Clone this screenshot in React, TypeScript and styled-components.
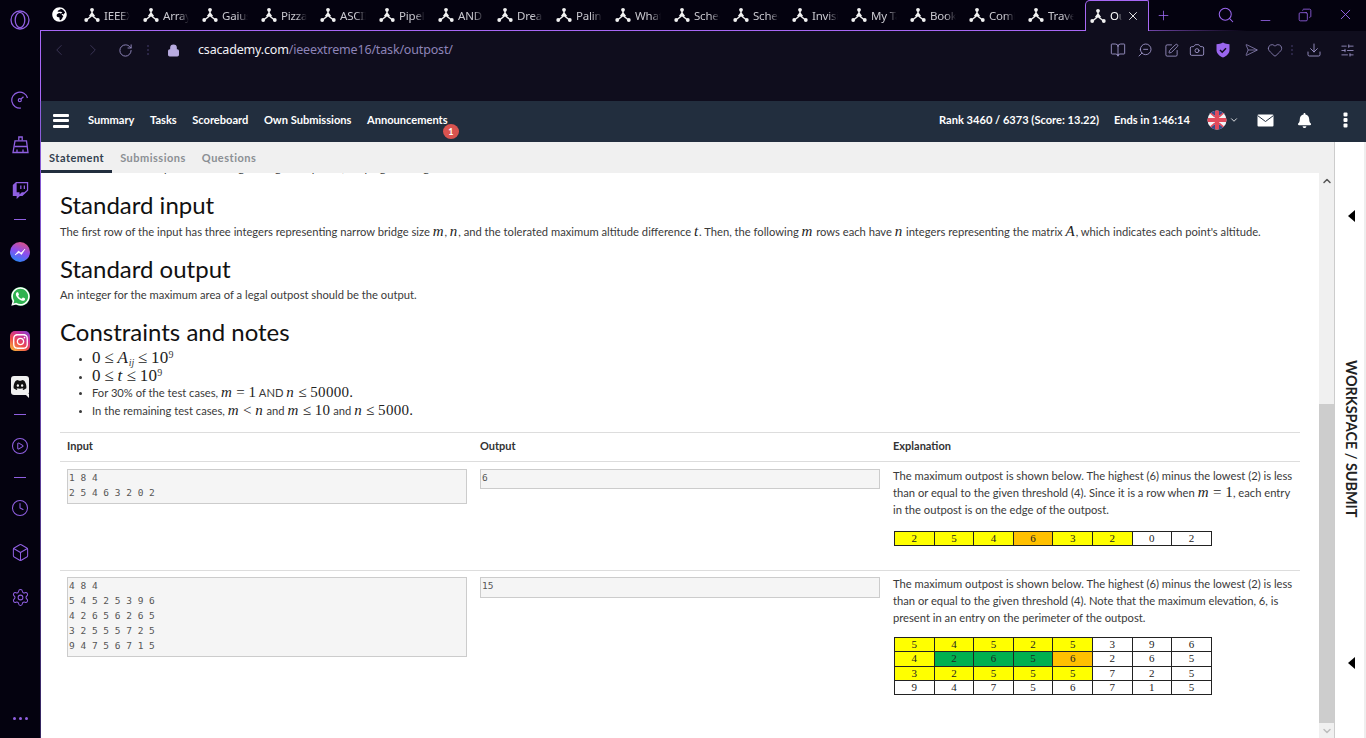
import React from "react";
import styled, { createGlobalStyle } from "styled-components";
import {
  BookOpen, Box, Camera, ChevronDown, ChevronLeft, ChevronRight, ChevronUp, CirclePlay, Clock, Copy, Download,
  Heart, Lock, Minus, Plus, RotateCw, Search, Send, Settings, SlidersHorizontal, SquarePen, X, ZoomOut,
} from "lucide-react";
import { FaBell, FaDiscord, FaGlobeAfrica, FaInstagram, FaTwitch, FaWhatsapp } from "react-icons/fa";

const Global = createGlobalStyle`
  html, body, #root { height: 100%; margin: 0; }
  body { overflow: hidden; background: #04020f; font-family: "Lato", "Liberation Sans", sans-serif; }
  * { box-sizing: border-box; }
`;

const purple = "#8f5fe0";

const Shell = styled.div`display: flex; height: 738px; width: 1366px; overflow: hidden;`;
const Rail = styled.nav`
  width: 40px; flex: none; padding: 8px 0; display: flex; flex-direction: column; align-items: center;
  background: #04020f; color: ${purple};
`;
const RailSlot = styled.div<{ $gap?: number; $end?: boolean }>`
  height: 24px; width: 24px; flex: none; display: flex; align-items: center; justify-content: center;
  margin-top: ${p => (p.$end ? "auto" : `${p.$gap ?? 0}px`)};
`;
const Dash = styled.span`display: block; width: 12px; height: 1px; background: #8f5fe0;`;
const Messenger = styled.span`
  width: 20px; height: 20px; border-radius: 50%; display: flex; align-items: center; justify-content: center; color: #fff;
  background: linear-gradient(200deg, #e0527c 5%, #8a4ef0 50%, #1f8cf5 95%);
`;
const Whats = styled.span`
  width: 19px; height: 19px; display: flex; align-items: center; justify-content: center; border-radius: 50%;
  background: #2fb350; color: #fff; font-size: 21px;
`;
const Insta = styled.span`
  width: 20px; height: 20px; border-radius: 5px; display: flex; align-items: center; justify-content: center; color: #fff;
  background: linear-gradient(35deg, #f6b73c 5%, #ee4b4b 40%, #c9329a 70%, #7a45d8 100%); font-size: 17px;
`;
const DiscordBadge = styled.span`
  width: 18px; height: 19px; border-radius: 3px; display: flex; align-items: center; justify-content: center;
  background: #f0f0f0; color: #111; font-size: 14px; position: relative;
  &::after {
    content: ""; position: absolute; right: 0; bottom: -3px; width: 0; height: 0;
    border-top: 4px solid #f0f0f0; border-left: 4px solid transparent;
  }
`;
const Dots = styled.span`
  display: flex; gap: 3px;
  i { display: block; width: 3px; height: 3px; border-radius: 50%; background: #8f5fe0; }
`;

const Main = styled.div`flex: 1; min-width: 0; display: flex; flex-direction: column;`;
const TabStrip = styled.div`
  height: 31px; flex: none; display: flex; align-items: center; padding-left: 1px; color: #d8d6de;
  background:
    linear-gradient(90deg, #a868f5 0, #a868f5 80%, rgba(168,104,245,0) 91%) left bottom / 100% 1px no-repeat,
    #04020f;
`;
const GlobeSlot = styled.div`width: 43px; flex: none; display: flex; justify-content: center; color: #fff; font-size: 15px; padding-right: 7px; margin-top: -2px;`;
const Tab = styled.div`width: 59px; flex: none; display: flex; align-items: center; gap: 4px; height: 30px; margin-top: -1px;`;
const TabName = styled.span<{ $w?: number }>`
  width: ${p => p.$w ?? 26}px; overflow: hidden; white-space: nowrap; font: 11.5px "Noto Sans", sans-serif; letter-spacing: -0.2px; color: #c9c8cf;
  -webkit-mask-image: linear-gradient(90deg, #000 60%, transparent 100%);
  mask-image: linear-gradient(90deg, #000 60%, transparent 100%);
`;
const ActiveTab = styled.div`
  width: 64px; height: 31px; flex: none; margin-left: -2px; display: flex; align-items: center; gap: 4px; padding: 0 0 1px 4px;
  background: #0f0d1d; border: 1px solid #a868f5; border-bottom: 0; border-top-left-radius: 5px; border-top-right-radius: 2px;
  color: #fff;
`;
const ActiveName = styled(TabName)`width: 12px; color: #fff;`;
const PlusSlot = styled.div`width: 28px; padding-left: 7px; color: #9a66ee; display: flex;`;
const WindowControls = styled.div`margin-left: auto; display: flex; align-items: center; padding-right: 12px; color: #9a66ee; gap: 21px; margin-top: -2px;`;

const AddressBar = styled.div`
  height: 70px; flex: none; background: #0f0d1d; border-left: 1px solid #a868f5; display: flex; align-items: flex-start; padding-top: 9px; color: #7d72a8;
`;
const BarSlot = styled.div<{ $w: number; $dim?: boolean; $c?: string }>`
  width: ${p => p.$w}px; height: 20px; flex: none; display: flex; justify-content: center; align-items: center;
  color: ${p => p.$c ?? (p.$dim ? "#3d3759" : "#8d84b8")};
`;
const Url = styled.div`font: 12.5px/20px "Noto Sans", sans-serif; color: #8d84b8; margin-left: 6px; letter-spacing: -0.17px; white-space: nowrap;`;
const UrlHost = styled.span`color: #f2f1f6;`;
const BarTools = styled.div`margin-left: auto; display: flex; padding-right: 2px;`;
const VDots = styled.span`
  display: flex; flex-direction: column; gap: 2px;
  i { width: 2px; height: 2px; background: #2a2545; display: block; }
`;

const Page = styled.div`
  flex: 1; min-height: 0; display: flex; flex-direction: column; background: #fff;
  border-left: 1px solid; border-image: linear-gradient(180deg, #8f5fe0 0%, #6a48ad 45%, #33255e 100%) 1;
`;
const SiteNav = styled.header`
  height: 41px; flex: none; background: #222e3e; display: flex; align-items: center; color: #fff; padding-left: 12px;
  font: 700 11.1px "Lato", sans-serif;
`;
const Burger = styled.span`
  width: 16px; height: 14px; display: flex; flex-direction: column; justify-content: space-between; margin-right: 19px; margin-top: -2px;
  i { display: block; height: 3px; background: #fff; border-radius: 1px; }
`;
const NavLinks = styled.div`display: flex; gap: 15.5px; margin-top: -5px;`;
const NavLink = styled.a`position: relative; white-space: nowrap;`;
const Badge = styled.span`
  position: absolute; left: 76px; top: 11px; width: 16px; height: 15px; border-radius: 50%; background: #d9534f; color: #fff;
  font: 700 9px/15px "Lato", sans-serif; text-align: center;
`;
const NavRight = styled.div`margin-left: auto; display: flex; align-items: center; margin-top: -3px;`;
const NavStat = styled.span`white-space: nowrap; margin-right: 15px; margin-top: -2px;`;
const FlagWrap = styled.span`display: flex; align-items: center; margin-left: 2px; gap: 2px; margin-right: 16px; svg { display: block; }`;
const NavIcon = styled.span<{ $w: number; $l?: number; $r?: number }>`
  width: ${p => p.$w}px; display: flex; justify-content: center; flex: none;
  margin-left: ${p => p.$l ?? 0}px; margin-right: ${p => p.$r ?? 0}px;
`;

const Workarea = styled.div`flex: 1; min-height: 0; display: flex;`;
const Statement = styled.div`flex: 1; min-width: 0; display: flex; flex-direction: column; border-right: 1px solid #ccc;`;
const SubTabs = styled.div`height: 31px; flex: none; display: flex; background: #f0f0f0;`;
const SubTab = styled.a<{ $active?: boolean }>`
  height: 31px; padding: 0 8px; font: 700 11px/31px "Lato", sans-serif; letter-spacing: 0.5px;
  color: ${p => (p.$active ? "#33404f" : "#8b8f94")};
  border-bottom: 3px solid ${p => (p.$active ? "#222e3e" : "transparent")};
`;
const ScrollArea = styled.div`flex: 1; min-height: 0; display: flex; overflow: hidden;`;
const Doc = styled.article`flex: 1; min-width: 0; overflow: hidden; padding: 0 19px; background: #fff; color: #3a3a3a; font: 11.2px/17px "Lato", sans-serif;`;
const ClippedLine = styled.p`margin: -14px 0 0; height: 17px; white-space: nowrap; padding-left: 66px;`;
const H2 = styled.h2<{ $top: number }>`margin: ${p => p.$top}px 0 0; font: 400 24px/30px "Lato", sans-serif; color: #111;`;
const Para = styled.p<{ $top: number }>`margin: ${p => p.$top}px 0 0; white-space: nowrap; height: 17px;`;
const Bullets = styled.ul`margin: 2px 0 0; padding: 0 0 0 32px; list-style: disc;`;
const Bullet = styled.li`
  height: 17.5px; line-height: 17.5px; white-space: nowrap; color: #3a3a3a;
  &::marker { font-size: 9px; }
`;
const M = styled.span`font: italic 15px/1 "Liberation Serif", serif; color: #222; letter-spacing: 0.9px;`;
const MR = styled.span`font: 15px/1 "Liberation Serif", serif; color: #222; letter-spacing: 0.3px;`;
const Rel = styled(MR)`margin: 0 3.5px;`;
const MSub = styled.sub`font: italic 10px/0 "Liberation Serif", serif; vertical-align: -3px;`;
const MSup = styled.sup`font: 10px/0 "Liberation Serif", serif; vertical-align: 5px;`;
const BigMath = styled.span`
  ${M}, ${MR} { font-size: 17px; }
`;

const Examples = styled.div`margin-top: 13px; border-top: 1px solid #ddd; width: 1240px;`;
const ExampleRow = styled.div<{ $h: number; $pad?: number }>`
  display: grid; grid-template-columns: repeat(3, 413px); height: ${p => p.$h}px; border-bottom: 1px solid #ddd; padding: ${p => p.$pad ?? 0}px 0 0 7px;
  &:last-child { border-bottom: 0; }
`;
const HeadCell = styled.div`font: 700 11px/26px "Lato", sans-serif; color: #333;`;
const Pre = styled.pre<{ $h: number }>`
  margin: 0; width: 400px; height: ${p => p.$h}px; background: #f5f5f5; border: 1px solid #ccc; padding: 0 0 0 1px;
  font: 9.5px/15px "DejaVu Sans Mono", monospace; color: #555; overflow: hidden;
`;
const ExplCell = styled.div`margin-top: -2px; font: 11.2px/17px "Lato", sans-serif; color: #3a3a3a; white-space: nowrap;`;
const Grid = styled.table<{ $top: number }>`
  border-collapse: collapse; margin: ${p => p.$top}px 0 0 1px; table-layout: fixed; width: 317px;
`;
const Td = styled.td<{ $bg?: string }>`
  border: 1px solid #222; height: 14.25px; padding: 0; text-align: center; width: 39.6px;
  font: 11px/13px "Liberation Serif", serif; color: #222; background: ${p => p.$bg ?? "#fff"};
`;

const SidePanel = styled.aside`
  width: 31px; flex: none; background: #fff; border-right: 2px solid #eee; display: flex; flex-direction: column; align-items: center; padding-left: 3px;
`;
const Tri = styled.span<{ $top: number }>`
  margin-top: ${p => p.$top}px; flex: none; width: 0; height: 0; border-top: 6px solid transparent; border-bottom: 6px solid transparent; border-right: 7px solid #000;
`;
const VText = styled.span`
  margin-top: 138px; writing-mode: vertical-rl; font: 700 14.4px/16px "Lato", sans-serif; color: #222; white-space: nowrap; height: 158px;
`;

const Scrollbar = styled.div`width: 15px; flex: none; background: #f0f0f0; display: flex; flex-direction: column; align-items: center; color: #555;`;
const ScrollBtn = styled.div<{ $off?: boolean }>`height: 15px; width: 15px; flex: none; display: flex; align-items: center; justify-content: center; color: ${p => (p.$off ? "#bdbdbd" : "#555")}; background: #f0f0f0;`;
const ScrollSpace = styled.div`flex: 1;`;
const Thumb = styled.div`height: 319px; width: 15px; flex: none; background: #cdcdcd;`;

const CsIcon = () => (
  <svg width="16" height="16" viewBox="0 0 16 16" style={{ color: "#f2f2f2", flex: "none" }}>
    <path d="M8 3V8.500M8 8.500L2.500 13M8 8.500L13.500 13M5.500 9.500L8 6L10.500 9.500" stroke="currentColor" strokeWidth="1.500" fill="none" />
    <circle cx="8" cy="2.800" r="1.900" fill="currentColor" />
    <circle cx="2.200" cy="13" r="1.900" fill="currentColor" />
    <circle cx="13.800" cy="13" r="1.900" fill="currentColor" />
  </svg>
);

const OperaLogo = () => (
  <svg width="20" height="20" viewBox="0 0 20 20" fill="none" stroke="#8f5fe0" strokeWidth="1.300">
    <circle cx="10" cy="10" r="9" />
    <ellipse cx="10" cy="10" rx="4.800" ry="7.600" />
  </svg>
);

const SpeedDial = () => (
  <svg width="18" height="18" viewBox="0 0 18 18" fill="none" stroke="#8f5fe0" strokeWidth="1.200">
    <path d="M16.500 7A8 8 0 1 0 10 17" />
    <circle cx="8.800" cy="9.200" r="1.500" />
    <path d="M10 8L12.500 5.800" />
    <path d="M13 16.200v.1M15.200 14v.1M16.600 11v.1" strokeWidth="1.300" />
  </svg>
);

const BrushBag = () => (
  <svg width="17" height="18" viewBox="0 0 17 18" fill="none" stroke="#8f5fe0" strokeWidth="1.300">
    <path d="M6.800 4.500V1h3.400v3.500" />
    <path d="M3 4.800H14.500L16 16.500H1Z" />
    <path d="M2.400 10.500H15M5 16.500V13.500M11 16.500V13.500" />
  </svg>
);

const UkFlag = () => (
  <svg width="20" height="20" viewBox="0 0 20 20">
    <defs><clipPath id="flagc"><circle cx="10" cy="10" r="9.500" /></clipPath></defs>
    <g clipPath="url(#flagc)">
      <rect width="20" height="20" fill="#f3f3f6" />
      <path d="M0 0h8v6L0 0M20 0h-8v6l8-6M0 20h8v-6l-8 6M20 20h-8v-6l8 6" fill="#3a4a8a" />
      <path d="M0 0L8 7M20 0L12 7M0 20L8 13M20 20L12 13" stroke="#e24a5c" strokeWidth="1.600" />
      <rect x="8" width="4" height="20" fill="#e24a5c" />
      <rect y="8" width="20" height="4" fill="#e24a5c" />
    </g>
  </svg>
);

const Mail = () => (
  <svg width="17" height="13" viewBox="0 0 17 13">
    <rect width="16" height="12" x="0.500" y="0.500" rx="1" fill="#fff" />
    <path d="M0.500 1.500L8.500 7.500L16.500 1.500" fill="none" stroke="#222e3e" strokeWidth="1" />
  </svg>
);

const ShieldFill = () => (
  <svg width="14" height="16" viewBox="0 0 14 16">
    <path d="M7 0.500C9 1.600 11 2 13.500 2.200V8c0 3.600-3 6-6.500 7.500C3.500 14 .5 11.600.5 8V2.200C3 2 5 1.600 7 .5Z" fill="#9a66ee" />
    <path d="M4 8l2.200 2.200L10 6.300" fill="none" stroke="#0f0d1d" strokeWidth="1.500" />
  </svg>
);

const Kebab = () => (
  <svg width="5" height="16" viewBox="0 0 5 16" fill="#fff">
    <rect x="0.500" y="0.500" width="4" height="4" rx="1" />
    <rect x="0.500" y="6" width="4" height="4" rx="1" />
    <rect x="0.500" y="11.500" width="4" height="4" rx="1" />
  </svg>
);

const tabs = ["IEEEXtr", "Arrays", "Gaius", "Pizzas", "ASCII", "Pipeline", "AND", "Dream", "Palindr", "What", "Schedu", "Schedu", "Invisible", "My Tas", "Books", "Combin", "Travel"];

const Y = "#ffff00", O = "#ffc000", G = "#00b050";
const g1: [string, string?][][] = [[["2", Y], ["5", Y], ["4", Y], ["6", O], ["3", Y], ["2", Y], ["0"], ["2"]]];
const g2: [string, string?][][] = [
  [["5", Y], ["4", Y], ["5", Y], ["2", Y], ["5", Y], ["3"], ["9"], ["6"]],
  [["4", Y], ["2", G], ["6", G], ["5", G], ["6", O], ["2"], ["6"], ["5"]],
  [["3", Y], ["2", Y], ["5", Y], ["5", Y], ["5", Y], ["7"], ["2"], ["5"]],
  [["9"], ["4"], ["7"], ["5"], ["6"], ["7"], ["1"], ["5"]],
];

const ValueGrid = ({ rows, top }: { rows: [string, string?][][]; top: number }) => (
  <Grid $top={top}>
    <tbody>
      {rows.map((r, i) => (
        <tr key={i}>{r.map(([v, bg], j) => <Td key={j} $bg={bg}>{v}</Td>)}</tr>
      ))}
    </tbody>
  </Grid>
);

const toolColor = "#a49bd0";

export default function App() {
  return (
    <Shell>
      <Global />
      <Rail>
        <RailSlot><OperaLogo /></RailSlot>
        <RailSlot $gap={56}><SpeedDial /></RailSlot>
        <RailSlot $gap={21}><BrushBag /></RailSlot>
        <RailSlot $gap={21}><FaTwitch size={17} /></RailSlot>
        <RailSlot $gap={5}><Dash /></RailSlot>
        <RailSlot $gap={9}><Messenger><svg width="12" height="9" viewBox="0 0 12 9"><path d="M1 7l3.500-4 2.500 2 4-4-3.500 5.500-2.500-2z" fill="#fff" stroke="#fff" strokeWidth=".6" /></svg></Messenger></RailSlot>
        <RailSlot $gap={20}><Whats><FaWhatsapp /></Whats></RailSlot>
        <RailSlot $gap={21}><Insta><FaInstagram /></Insta></RailSlot>
        <RailSlot $gap={20}><DiscordBadge><FaDiscord /></DiscordBadge></RailSlot>
        <RailSlot $gap={5}><Dash /></RailSlot>
        <RailSlot $gap={8}><CirclePlay size={18} strokeWidth={1.4} /></RailSlot>
        <RailSlot $gap={7}><Dash /></RailSlot>
        <RailSlot $gap={7}><Clock size={18} strokeWidth={1.4} /></RailSlot>
        <RailSlot $gap={20}><Box size={19} strokeWidth={1.3} /></RailSlot>
        <RailSlot $gap={21}><Settings size={19} strokeWidth={1.3} /></RailSlot>
        <RailSlot $end><Dots><i /><i /><i /></Dots></RailSlot>
      </Rail>
      <Main>
        <TabStrip>
          <GlobeSlot><FaGlobeAfrica /></GlobeSlot>
          {tabs.map((t, i) => (
            <Tab key={i}><CsIcon /><TabName>{t}</TabName></Tab>
          ))}
          <ActiveTab><CsIcon /><ActiveName>Outpost</ActiveName><X size={14} strokeWidth={1.5} /></ActiveTab>
          <PlusSlot><Plus size={15} strokeWidth={1.3} /></PlusSlot>
          <WindowControls>
            <Search size={18} strokeWidth={1.4} style={{ marginRight: 2 }} />
            <Minus size={15} strokeWidth={1.3} style={{ marginTop: 11 }} />
            <Copy size={14} strokeWidth={1.4} style={{ transform: "scaleX(-1)", marginLeft: 4 }} />
            <X size={17} strokeWidth={1.3} style={{ marginLeft: 4 }} />
          </WindowControls>
        </TabStrip>
        <AddressBar>
          <BarSlot $w={35} $dim><ChevronLeft size={18} strokeWidth={1.2} /></BarSlot>
          <BarSlot $w={33} $dim><ChevronRight size={18} strokeWidth={1.2} /></BarSlot>
          <BarSlot $w={33}><RotateCw size={15} strokeWidth={1.6} /></BarSlot>
          <BarSlot $w={12}><VDots><i /><i /><i /></VDots></BarSlot>
          <BarSlot $w={38} $c="#b8abe0"><Lock size={13} strokeWidth={2.2} fill="#b8abe0" /></BarSlot>
          <Url><UrlHost>csacademy.com</UrlHost>/ieeextreme16/task/outpost/</Url>
          <BarTools>
            <BarSlot $w={26} $c={toolColor}><BookOpen size={16} strokeWidth={1.3} /></BarSlot>
            <BarSlot $w={27} $c={toolColor}><ZoomOut size={16} strokeWidth={1.3} style={{ transform: "scaleX(-1)" }} /></BarSlot>
            <BarSlot $w={26} $c={toolColor}><SquarePen size={15} strokeWidth={1.3} /></BarSlot>
            <BarSlot $w={26} $c={toolColor}><Camera size={16} strokeWidth={1.3} /></BarSlot>
            <BarSlot $w={26}><ShieldFill /></BarSlot>
            <BarSlot $w={26}><Send size={14} strokeWidth={1.3} style={{ transform: "rotate(45deg)" }} /></BarSlot>
            <BarSlot $w={26}><Heart size={16} strokeWidth={1.3} /></BarSlot>
            <BarSlot $w={8}><VDots><i /><i /><i /></VDots></BarSlot>
            <BarSlot $w={35} $c={toolColor}><Download size={16} strokeWidth={1.3} /></BarSlot>
            <BarSlot $w={33} $c={toolColor}><SlidersHorizontal size={15} strokeWidth={1.3} /></BarSlot>
          </BarTools>
        </AddressBar>
        <Page>
          <SiteNav>
            <Burger><i /><i /><i /></Burger>
            <NavLinks>
              <NavLink>Summary</NavLink>
              <NavLink>Tasks</NavLink>
              <NavLink>Scoreboard</NavLink>
              <NavLink>Own Submissions</NavLink>
              <NavLink>Announcements<Badge>1</Badge></NavLink>
            </NavLinks>
            <NavRight>
              <NavStat>Rank 3460 / 6373 (Score: 13.22)</NavStat>
              <NavStat>Ends in 1:46:14</NavStat>
              <FlagWrap><UkFlag /><ChevronDown size={10} strokeWidth={2} /></FlagWrap>
              <NavIcon $w={20}><Mail /></NavIcon>
              <NavIcon $w={19} $l={20}><FaBell size={15} /></NavIcon>
              <NavIcon $w={20} $l={21} $r={11}><Kebab /></NavIcon>
            </NavRight>
          </SiteNav>
          <Workarea>
            <Statement>
              <SubTabs>
                <SubTab $active>Statement</SubTab>
                <SubTab>Submissions</SubTab>
                <SubTab>Questions</SubTab>
              </SubTabs>
              <ScrollArea>
                <Doc>
                  <ClippedLine>The outpost is a rectangular region of points, keeping the range of altitudes within the limit.</ClippedLine>
                  <H2 $top={14}>Standard input</H2>
                  <Para $top={3}>The first row of the input has three integers representing narrow bridge size <M>m</M>, <M>n</M>, and the tolerated maximum altitude difference <M>t</M>. Then, the following <M>m</M> rows each have <M>n</M> integers representing the matrix <M>A</M>, which indicates each point's altitude.</Para>
                  <H2 $top={14}>Standard output</H2>
                  <Para $top={2}>An integer for the maximum area of a legal outpost should be the output.</Para>
                  <H2 $top={14}>Constraints and notes</H2>
                  <Bullets>
                    <Bullet><BigMath><MR>0</MR><Rel>≤</Rel><M>A</M><MSub>ij</MSub><Rel>≤</Rel><MR>10</MR><MSup>9</MSup></BigMath></Bullet>
                    <Bullet><BigMath><MR>0</MR><Rel>≤</Rel><M>t</M><Rel>≤</Rel><MR>10</MR><MSup>9</MSup></BigMath></Bullet>
                    <Bullet>For 30% of the test cases, <M>m</M><Rel>=</Rel><MR>1</MR> AND <M>n</M><Rel>≤</Rel><MR>50000.</MR></Bullet>
                    <Bullet>In the remaining test cases, <M>m</M><Rel>&lt;</Rel><M>n</M> and <M>m</M><Rel>≤</Rel><MR>10</MR> and <M>n</M><Rel>≤</Rel><MR>5000.</MR></Bullet>
                  </Bullets>
                  <Examples>
                    <ExampleRow $h={29}>
                      <HeadCell>Input</HeadCell><HeadCell>Output</HeadCell><HeadCell>Explanation</HeadCell>
                    </ExampleRow>
                    <ExampleRow $h={109} $pad={7}>
                      <div><Pre $h={35}>{"1 8 4\n2 5 4 6 3 2 0 2"}</Pre></div>
                      <div><Pre $h={20}>6</Pre></div>
                      <ExplCell>
                        The maximum outpost is shown below. The highest (6) minus the lowest (2) is less<br />
                        than or equal to the given threshold (4). Since it is a row when <M>m</M><Rel>=</Rel><MR>1</MR>, each entry<br />
                        in the outpost is on the edge of the outpost.
                        <ValueGrid rows={g1} top={13} />
                      </ExplCell>
                    </ExampleRow>
                    <ExampleRow $h={140} $pad={6}>
                      <div><Pre $h={80}>{"4 8 4\n5 4 5 2 5 3 9 6\n4 2 6 5 6 2 6 5\n3 2 5 5 5 7 2 5\n9 4 7 5 6 7 1 5"}</Pre></div>
                      <div><Pre $h={21}>15</Pre></div>
                      <ExplCell>
                        The maximum outpost is shown below. The highest (6) minus the lowest (2) is less<br />
                        than or equal to the given threshold (4). Note that the maximum elevation, 6, is<br />
                        present in an entry on the perimeter of the outpost.
                        <ValueGrid rows={g2} top={11} />
                      </ExplCell>
                    </ExampleRow>
                  </Examples>
                </Doc>
                <Scrollbar>
                  <ScrollBtn><ChevronUp size={12} strokeWidth={3} /></ScrollBtn>
                  <ScrollSpace />
                  <Thumb />
                  <ScrollBtn $off><ChevronDown size={12} strokeWidth={3} /></ScrollBtn>
                </Scrollbar>
              </ScrollArea>
            </Statement>
            <SidePanel>
              <Tri $top={68} />
              <VText>WORKSPACE / SUBMIT</VText>
              <Tri $top={139} />
            </SidePanel>
          </Workarea>
        </Page>
      </Main>
    </Shell>
  );
}
